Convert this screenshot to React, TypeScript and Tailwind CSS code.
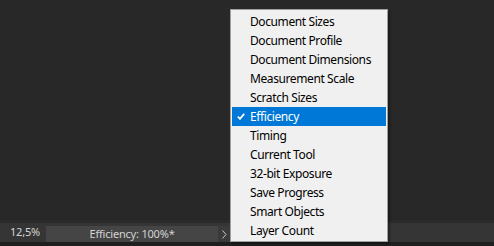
import React from "react";

const items = [
  "Document Sizes",
  "Document Profile",
  "Document Dimensions",
  "Measurement Scale",
  "Scratch Sizes",
  "Efficiency",
  "Timing",
  "Current Tool",
  "32-bit Exposure",
  "Save Progress",
  "Smart Objects",
  "Layer Count",
];

export default function App() {
  return (
    <div
      className="relative w-[494px] h-[246px] bg-[#282828] flex flex-col overflow-hidden"
      style={{ fontFamily: '"Noto Sans", "Open Sans", sans-serif' }}
    >
      <div className="flex-1" />
      <div className="h-[3px] bg-[#2a2a2a]" />
      <div className="h-[19px] bg-[#353535] flex items-stretch text-[11px] tracking-[-0.2px] text-[#d4d4d4]">
        <div className="w-[46px] flex items-center pl-[10px]">12,5%</div>
        <div className="w-[172px] mt-[3px] bg-[#454545] flex items-center justify-center">
          Efficiency: 100%*
        </div>
        <div className="w-[12px] mt-[3px] bg-[#3a3a3a] flex items-center justify-center">
          <svg width="5" height="9" viewBox="0 0 5 9">
            <path d="M0.5 0.5 L4 4.5 L0.5 8.5" stroke="#c8c8c8" strokeWidth="1" fill="none" />
          </svg>
        </div>
        <div className="flex-1" />
      </div>
      <div className="h-[4px] bg-[#1f1f1f]" />

      <div className="absolute left-[230px] top-[9px] w-[158px] border border-[#a0a0a0] bg-[#f0f0f0] pt-[2px] pb-[1px] px-[1px] shadow-[2px_2px_2px_rgba(0,0,0,0.35)]">
        {items.map((it) => {
          const sel = it === "Efficiency";
          return (
            <div
              key={it}
              className={
                "h-[19px] flex items-center text-[12px] tracking-[-0.4px] relative " +
                (sel ? "bg-[#0078d7] text-white" : "text-[#000000]")
              }
            >
              {sel && (
                <svg className="absolute left-[5px] top-[6px]" width="8" height="7" viewBox="0 0 8 7">
                  <path d="M0.8 3.6 L3 5.8 L7.2 0.8" stroke="#ffffff" strokeWidth="1.8" fill="none" />
                </svg>
              )}
              <span className="pl-[18px]">{it}</span>
            </div>
          );
        })}
      </div>
    </div>
  );
}
